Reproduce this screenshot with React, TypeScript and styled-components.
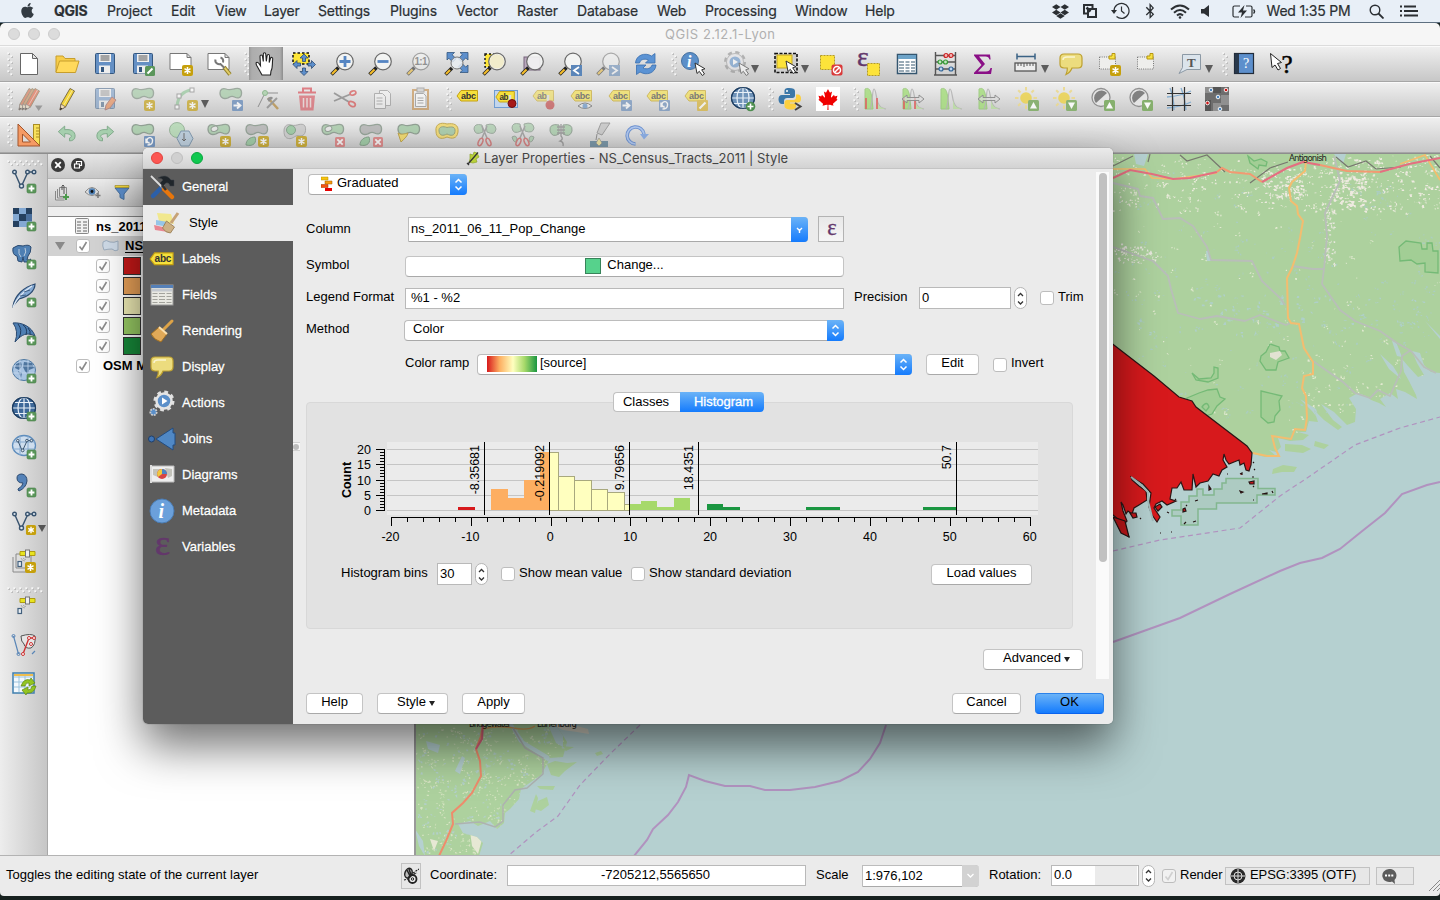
import React from "react";
import styled, { createGlobalStyle } from "styled-components";
import { FaApple, FaDropbox, FaBluetoothB, FaCanadianMapleLeaf } from "react-icons/fa";

const Global = createGlobalStyle`
  * { box-sizing: border-box; }
  body { margin: 0; overflow: hidden; background: #14201f; font-family: "Liberation Sans", Arial, sans-serif; font-size: 13px; color: #000; }
  svg { display: block; flex: none; }
`;

/* ---------- shared icon pieces ---------- */
const Star = () => (
  <g>
    <rect x="13" y="13" width="11" height="11" rx="2" fill="#c6a00c" />
    <path d="M18.5 15v7M15.5 16.7l6 3.6M21.5 16.7l-6 3.6" stroke="#fff" strokeWidth="1.5" />
  </g>
);
const Plus = () => (
  <g>
    <rect x="15" y="15" width="9" height="9" rx="1.5" fill="#5b965b" stroke="#477f48" strokeWidth=".6" />
    <path d="M19.5 16.6v5.8M16.6 19.5h5.8" stroke="#fff" strokeWidth="1.8" />
  </g>
);
const Cross = () => (
  <g>
    <rect x="14" y="14" width="10" height="10" rx="1.5" fill="#dd7373" />
    <path d="M16.3 16.3l5.4 5.4M21.7 16.3l-5.4 5.4" stroke="#fff" strokeWidth="1.8" />
  </g>
);
const Forward = () => (
  <g>
    <rect x="13" y="13" width="11" height="11" rx="1" fill="#5f86b8" />
    <path d="M14.5 18.5h6M18 15.5l3.5 3-3.5 3" stroke="#fff" strokeWidth="1.8" fill="none" />
  </g>
);
const Turn = () => (
  <g>
    <rect x="13" y="13" width="11" height="11" rx="1" fill="#5f86b8" />
    <path d="M16.500 22q5 0 5-4a2.800 2.800 0 1 0-2.800 2.200M15 15.500v4h3.500" stroke="#fff" strokeWidth="1.400" fill="none" />
  </g>
);
const Cursor = ({ x = 12, y = 10 }: { x?: number; y?: number }) => (
  <path d={`M${x} ${y}l2 10.500 2.300-2.200 3 4.200 2.200-1.500-2.800-4.200 3.300-1z`} fill="#fff" stroke="#333" strokeWidth="1" />
);
const BLOB = "M1 6C1 2 4 1 7 2c3 1.500 6 .500 9-.3C20 .6 23 2 22.500 7c-.5 4.500-4 4.500-7 3-3-1.500-4-.5-6.500.8C5 12.500 1 11 1 6z";
const Blob = ({ fill = "#a4cba6" }: { fill?: string }) => <path d={BLOB} fill={fill} stroke="#7d8f80" strokeWidth="1.300" />;
const Lens = ({ children }: { children?: React.ReactNode }) => (
  <g>
    <path d="M1.500 22.500L8.500 15.500" stroke="#222" strokeWidth="3.600" />
    <path d="M2 22L6.500 17.500" stroke="#f5bd2a" strokeWidth="2.200" />
    <circle cx="15" cy="9.500" r="8.300" fill="#f4f5f4" fillOpacity=".9" stroke="#6b6b6b" strokeWidth="1.200" />
    {children}
  </g>
);
const Tag = ({ t = "abc" }: { t?: string }) => (
  <g>
    <path d="M1 9L5 3.500H21.500V14H5z" fill="#f6e03c" stroke="#c5a114" strokeWidth="1" />
    <text x="5" y="11.800" fontSize="9" fontWeight="700" fill="#333" textLength={t.length * 5}>{t}</text>
  </g>
);
const Floppy = () => (
  <g>
    <rect x="2.500" y="1.500" width="19" height="20" rx="1" fill="#6590c4" stroke="#34577f" />
    <rect x="6" y="2" width="12" height="8" fill="#f2f2f2" />
    <path d="M7.500 4h9M7.500 6h9M7.500 8h9" stroke="#444" strokeWidth=".9" />
    <rect x="6" y="13.500" width="11" height="8" fill="#eee" />
    <rect x="8" y="15" width="3" height="5" fill="#34577f" />
  </g>
);
const VNodes = () => (
  <g fill="none" stroke="#39546f" strokeWidth="1.400">
    <path d="M2.500 3L8 15.500 9.500 17 16 3h6" />
    <circle cx="2.500" cy="3" r="1.800" fill="#dde6ee" />
    <circle cx="9.500" cy="17" r="2" fill="#dde6ee" />
    <circle cx="15.500" cy="3" r="1.800" fill="#dde6ee" />
    <circle cx="22" cy="3" r="1.800" fill="#dde6ee" />
  </g>
);
const Globe = ({ fill = "#6d9bcd", line = "#1f3f63" }: { fill?: string; line?: string }) => (
  <g stroke={line} fill="none" strokeWidth="1.200">
    <ellipse cx="12" cy="11" rx="11.500" ry="10.500" fill={fill} />
    <path d="M0.500 11h23M2.500 5.500h19M2.500 16.500h19M12 .500v21" stroke="#e8f0f8" />
    <ellipse cx="12" cy="11" rx="6" ry="10.500" stroke="#e8f0f8" />
    <ellipse cx="12" cy="11" rx="11.500" ry="10.500" />
  </g>
);
const Hist = ({ marks, arrows }: { marks?: boolean; arrows?: boolean }) => (
  <g>
    <path d="M2 22V2c4-2 6 1 7 10l1 10z" fill="#9fdc72" stroke="#8cc568" />
    <path d="M7 22c3-5 2-20 4-20s2 9 4 14 4 5 8 6" fill="none" stroke="#aaa" strokeWidth="1.200" />
    <path d="M14 13c1 6 4 8 9 9H14z" fill="#b7dd9c" />
    {marks && <path d="M3 11v11M14 11v11" stroke="#e23b3b" strokeWidth="1.600" />}
    {arrows && <path d="M1 12l5-4v2.500h12V8l5 4-5 4v-2.500H6V16z" fill="#ddd" fillOpacity=".7" stroke="#777" />}
  </g>
);
const Sun = () => (
  <g>
    <circle cx="11" cy="11" r="5.800" fill="#ecd350" />
    <path d="M11 0v3.500M11 18.500V22M0 11h3.500M18.500 11H22M3.200 3.200l2.300 2.300M16.500 16.500l2.300 2.300M18.800 3.200l-2.300 2.300M3.200 18.800l2.300-2.300" stroke="#ecd98a" strokeWidth="2" />
  </g>
);
const Contrast = () => (
  <g>
    <circle cx="10" cy="10.500" r="9" fill="#e6e6e6" stroke="#888" strokeWidth="1.300" />
    <path d="M16 6A7 7 0 1 0 5 16z" fill="#777" />
  </g>
);
const UpDown = ({ down }: { down?: boolean }) => (
  <g>
    <rect x="13" y="13" width="11" height="11" rx="1.500" fill="#7eac63" />
    <path d={down ? "M15 15.500h7l-3.500 6.500z" : "M15 21.500h7L18.500 15z"} fill="#fff" />
  </g>
);
const PencilShape = ({ c = "#f2d43a", x = 0 }: { c?: string; x?: number }) => (
  <g transform={`translate(${x} 0)`}>
    <path d="M4 17L13 1.500l4.500 2.500L8.500 20 3 23z" fill={c} stroke="#70613a" strokeWidth=".9" />
    <path d="M6.500 18.500L15.500 3" stroke="#fff" strokeOpacity=".5" />
    <path d="M4 17l4.500 3L3 23z" fill="#f0dfbd" stroke="#655" strokeWidth=".7" />
    <path d="M3.700 20.500l1.500 1L3 23z" fill="#111" />
  </g>
);
const Gear = () => (
  <g>
    <circle cx="14" cy="10" r="9" fill="none" stroke="#e0e0e0" strokeWidth="3" strokeDasharray="3.700 3.370" />
    <circle cx="14" cy="10" r="7.500" fill="#5b8fc9" stroke="#e4e4e4" strokeWidth="2.500" />
    <path d="M12 6.500l5.500 3.500-5.500 3.500z" fill="#fff" />
  </g>
);
const Balloon = () => (
  <g>
    <path d="M5 2h14q4 0 4 4v6q0 4-4 4h-6c-1 3-3 5-6 6.500 1-2 1.500-4 1.300-6.500H5q-4 0-4-4V6q0-4 4-4z" fill="#ecdc7e" stroke="#bda02f" strokeWidth="1.200" />
    <path d="M4 8q0-3 4-3h8" fill="none" stroke="#faf5d0" strokeWidth="1.500" />
  </g>
);
const Scissors = () => (
  <g fill="none">
    <path d="M9 3l5 12M14 3L9 15" stroke="#888" strokeWidth="1.500" />
    <ellipse cx="7.500" cy="19" rx="2" ry="4" stroke="#cf5757" strokeWidth="1.500" transform="rotate(25 7.500 19)" />
    <ellipse cx="15.500" cy="19" rx="2" ry="4" stroke="#cf5757" strokeWidth="1.500" transform="rotate(-25 15.500 19)" />
  </g>
);
const Undo = () => <path d="M1 9l8-7v4.500c8-1 13 2 13 8 0 4-3 6-7 6v-3.500c4-1 3-6-6-5.500V16z" fill="#a6cfae" stroke="#7fa98a" strokeWidth="1.200" />;
const Satellite = ({ y = 0 }: { y?: number }) => (
  <g transform={`translate(0 ${y})`}>
    <path d="M8 2.500h5.500v4H8zM17.500 2.500H23v4h-5.500z" fill="#e8e420" stroke="#b09c10" />
    <rect x="13.500" y="1" width="4" height="7" fill="#eee" stroke="#777" />
    <path d="M9 9q1 3 4 3M11 9q1 1.500 3 1.500" stroke="#aaa" fill="none" />
    <rect x="6" y="12.500" width="3.500" height="5" fill="#e8eef4" stroke="#43617e" strokeWidth="1.200" />
  </g>
);

const icons: Record<string, React.ReactNode> = {
  page: <path d="M3.500 1.500h12l5 5v16h-17zM15.500 1.500v5h5" fill="#fff" stroke="#666" />,
  folder: (
    <g stroke="#c79e2c">
      <path d="M1 20V4h7l2 2.500h10V10" fill="#f7cd4a" />
      <path d="M1 20L4.500 9H24l-3.500 11.500H1z" fill="#ffd95c" />
    </g>
  ),
  save: <Floppy />,
  saveas: (
    <g>
      <Floppy />
      <rect x="14" y="14" width="10" height="10" rx="1.500" fill="#5b965b" />
      <path d="M16.500 21.500l5-5" stroke="#fff" strokeWidth="2" />
    </g>
  ),
  newlayout: <g><path d="M1 1.500h17l4 4v12H1zM18 1.500v4h4" fill="#fff" stroke="#777" /><Star /></g>,
  layouts: (
    <g>
      <path d="M1 1.500h17l4 4v12H1zM18 1.500v4h4" fill="#fff" stroke="#777" />
      <path d="M17 15l6 7.500" stroke="#94832e" strokeWidth="4" />
      <path d="M17 15l6 7.500" stroke="#e3ce68" strokeWidth="2" />
      <path d="M8.500 7.500c-1 4 3 5 5 4.500l4 4M13.500 5.500c3 1 3 3 2.500 5" stroke="#777" strokeWidth="2" fill="none" />
    </g>
  ),
  hand: (
    <path d="M8 23L3 14c-1-2-1.500-3.500 0-3.800 1.500-.2 2.500 2 3.500 3.500L6 4.500c0-2 2.300-2 2.500 0l.8 5V2.300c0-2 2.400-2 2.500 0l.5 7 .8-5.500c.4-2 2.600-1.500 2.400.3l-.3 6.400 1.300-4.200c.6-1.600 2.500-1 2.200.7C18 12 19 16 17 19l-.5 4z" fill="#fff" stroke="#222" strokeWidth="1.100" />
  ),
  pansel: (
    <g>
      <rect x="1" y="1" width="16" height="11" fill="#fde639" stroke="#111" strokeWidth="1.500" strokeDasharray="2.500 2" />
      <path d="M12 2l4 4h-2.500v3.500h-3V6H8zM12 23.500l4-4h-2.500V16h-3v3.500H8zM1 12.500l4-4V11h3.500v3H5v2.500zM23.500 12.500l-4-4V11H16v3h3.500v2.500z" fill="#5d8fcc" stroke="#2e4c73" strokeWidth=".8" />
    </g>
  ),
  zoomin: <Lens><path d="M15 4v11M9.500 9.500h11" stroke="#5585c2" strokeWidth="2.800" /></Lens>,
  zoomout: <Lens><path d="M9.500 9.500h11" stroke="#5585c2" strokeWidth="2.800" /></Lens>,
  zoom1: <g opacity=".55"><Lens><text x="8.500" y="13" fontSize="10" fontWeight="700" fill="#555" textLength="13">1:1</text></Lens></g>,
  zoomfull: (
    <g>
      <path d="M3 .5h7.500L8.200 2.800l4 4-3.400 3.400-4-4L3 8zM24 .5v7.500l-2.300-2-4 4-3.400-3.400 4-4L16 .5zM24 20.500h-8l2.300-2-4-4 3.400-3.400 4 4L24 13z" fill="#5d8fcc" stroke="#34577f" strokeWidth=".8" />
      <path d="M1.500 22.500L8 16" stroke="#222" strokeWidth="3.600" />
      <path d="M2 22l4-4" stroke="#f5bd2a" strokeWidth="2.200" />
      <circle cx="13" cy="11" r="6" fill="#e9edf2" fillOpacity=".85" stroke="#777" />
    </g>
  ),
  zoomsel: <g><rect x="3" y="2" width="12" height="13" fill="#fde639" stroke="#111" strokeDasharray="2 2" strokeWidth="1.400" /><Lens><circle cx="15" cy="9.500" r="7" fill="#f1eccb" /></Lens></g>,
  zoomlayer: <g><rect x="4" y="5" width="16" height="13" fill="#b9a7bd" stroke="#75637a" /><Lens /></g>,
  zoomlast: <g><Lens /><rect x="13" y="13" width="11" height="11" fill="#5b86b9" /><path d="M21 15l-5 3.500 5 3.500" stroke="#fff" strokeWidth="1.800" fill="none" /></g>,
  zoomnext: <g opacity=".5"><Lens /><rect x="13" y="13" width="11" height="11" fill="#5b86b9" /><path d="M16 15l5 3.500-5 3.500" stroke="#fff" strokeWidth="1.800" fill="none" /></g>,
  refresh: (
    <g fill="#5b93d4" stroke="#3a6faf" strokeWidth=".8">
      <path d="M1.500 11C2 3 11 0 17.500 4L21 1.500V11h-9.500l3-3C10 6 6 8 5.500 11z" />
      <path d="M22 13c-.5 8-9.500 11-16 7l-3.500 2.500V13H12l-3 3c4 2 8.500 0 9-3z" />
    </g>
  ),
  info: <g><circle cx="9" cy="9" r="8.500" fill="#5b8fc9" stroke="#47719f" /><text x="6" y="15" fontSize="16" fontStyle="italic" fontWeight="700" fontFamily="Liberation Serif, serif" fill="#fff">i</text><Cursor x={14} y={11} /></g>,
  action: <g opacity=".55"><circle cx="11" cy="10" r="9.500" fill="none" stroke="#888" strokeWidth="3" strokeDasharray="4.100 3.360" /><circle cx="11" cy="10" r="8.500" fill="#e6e6ea" stroke="#999" /><circle cx="11" cy="10" r="5.500" fill="#5b8fc9" /><path d="M9 7l5 3-5 3z" fill="#fff" /><Cursor x={15} y={11} /></g>,
  select: <g><rect x="1" y="1.500" width="22" height="19" fill="#cfcfcf" stroke="#111" strokeWidth="1.600" strokeDasharray="3 1.500" /><rect x="3" y="3" width="15" height="13" fill="#fde33a" stroke="#c2a626" /><Cursor x={12} y={9} /></g>,
  deselect: <g><rect x="1.500" y="3.500" width="14" height="14" fill="#fde33a" stroke="#b39b24" strokeDasharray="2 1" /><rect x="12.500" y="12.500" width="11" height="11" rx="2" fill="#da3a3a" /><circle cx="18" cy="18" r="3.500" fill="none" stroke="#fff" strokeWidth="1.500" /><path d="M15.500 20.500l5-5" stroke="#fff" strokeWidth="1.500" /></g>,
  expr: <g><text x="0" y="14" fontSize="28" fontFamily="Liberation Serif, serif" fill="#63376b" stroke="#63376b" strokeWidth=".4">ε</text><rect x="10.500" y="11.500" width="12" height="12" fill="#fde33a" stroke="#b39b24" strokeDasharray="2 1" /></g>,
  table: <g><rect x="2.500" y="2.500" width="19" height="19" fill="#fff" stroke="#34566f" strokeWidth="1.500" /><path d="M3 5h18" stroke="#6da3c8" strokeWidth="4" /><path d="M4 10h5M10.500 10h4M16 10h4M4 13h5M10.500 13h4M16 13h4M4 16h5M10.500 16h4M16 16h4M4 19h5M10.500 19h4M16 19h4" stroke="#34566f" strokeWidth="1.200" /></g>,
  abacus: <g><path d="M2.500 0v23M22.500 0v23M1 23h23M2 3.500h20M2 10h20M2 17h20" stroke="#555" strokeWidth="1.400" /><g strokeWidth="1.200"><circle cx="13" cy="3.500" r="2" fill="#f3b4b4" stroke="#c22" /><circle cx="18" cy="3.500" r="2" fill="#f3b4b4" stroke="#c22" /><circle cx="7" cy="10" r="2" fill="#bfe6bf" stroke="#393" /><circle cx="12.500" cy="10" r="2" fill="#bfe6bf" stroke="#393" /><circle cx="8" cy="17" r="2" fill="#bcd6f0" stroke="#369" /><circle cx="18" cy="17" r="2" fill="#bcd6f0" stroke="#369" /></g></g>,
  sigma: <path d="M3 2.500h16l.6 5h-1.200c-.5-2-1.500-3-4-3H8l6 7.500-7 7.500h8c2.500 0 4-1 4.500-3.500H21l-1 6H3v-1.200L10.500 13 3 3.500z" fill="#8a0f86" />,
  measure: <g><path d="M3 4.500h18M3 1.500v6M21 1.500v6" stroke="#3a6285" strokeWidth="1.500" /><rect x="1" y="11" width="21" height="8" fill="#eee" stroke="#555" strokeWidth="1.300" /><path d="M4 11v3M7 11v3M10 11v4M13 11v3M16 11v3M19 11v3" stroke="#555" /></g>,
  tip: <Balloon />,
  newbook: <g><rect x="2.500" y="5" width="16" height="12" fill="#eeeeec" stroke="#777" strokeDasharray="1 1.200" /><path d="M12 7V4h3V1.500h3V7z" fill="#f7e242" stroke="#b7960f" /><Star /></g>,
  book: <g><rect x="2.500" y="5" width="16" height="12" fill="#eeeeec" stroke="#777" strokeDasharray="1 1.200" /><path d="M12 7V4h3V1.500h3V7z" fill="#f7e242" stroke="#b7960f" /></g>,
  annot: <g><path d="M4.500 2.500h18v15H9l-8 4 3.500-6z" fill="#dbe4ec" stroke="#8c99a5" /><text x="9" y="14.500" fontSize="13" fontWeight="700" fontFamily="Liberation Serif, serif" fill="#555">T</text></g>,
  help: <g><rect x="2.500" y="1.500" width="19" height="20" fill="#5d8fcc" stroke="#222c3a" strokeWidth="1.200" /><rect x="3" y="2" width="4" height="19" fill="#28384c" /><text x="11" y="16" fontSize="14" fontFamily="Liberation Serif, serif" fill="#fff">?</text></g>,
  whats: <g><path d="M.5 1.500l1.500 14 3-2.500 3 5 2.500-1.500-3-5 4-1z" fill="#fff" stroke="#222" /><text x="11.500" y="21" fontSize="25" fontFamily="Liberation Serif, serif" stroke="#000" strokeWidth=".5">?</text></g>,

  pencils: <g><g opacity=".55"><PencilShape c="#d8603a" x={-1} /><PencilShape c="#c4824c" x={2} /><PencilShape c="#e0552f" x={5} /></g><path d="M18 18.500h7.500L21.700 24z" fill="#999" /></g>,
  pencil: <g transform="translate(2 0)"><PencilShape /></g>,
  saveedit: <g opacity=".5"><Floppy /><path d="M13 18l6-8 4 3-6 8-5 2z" fill="#ee7733" stroke="#844" /></g>,
  addfeat: <g opacity=".65"><Blob /><Star /></g>,
  curve: <g opacity=".65"><path d="M3 19C4 10 8 4 18 3" fill="none" stroke="#8fc597" strokeWidth="3" /><rect x="1" y="18" width="4" height="4" fill="#fff" stroke="#888" /><rect x="16" y="1" width="4" height="4" fill="#fff" stroke="#888" /><rect x="3" y="7" width="4" height="4" fill="#fff" stroke="#888" /><Star /></g>,
  movefeat: <g opacity=".7"><Blob /><Forward /></g>,
  node: <g opacity=".75"><path d="M1 20L8 6h13" stroke="#777" fill="none" /><circle cx="8" cy="6" r="2.500" fill="#a6cfa6" stroke="#7a7" /><path d="M11 11l10 11" stroke="#b58d44" strokeWidth="2.500" /><path d="M20 11L10 21" stroke="#888" strokeWidth="2" /><path d="M10 12q4-4 6-1l-4 4z" fill="#777" /></g>,
  trash: <g opacity=".6" fill="none" stroke="#d83a45"><path d="M3 5.500h18M8 5V1.500h8V5" strokeWidth="2" /><path d="M4 8.500h16l-1.500 15h-13z" fill="#d9505a" stroke="none" /><path d="M8.500 11v9.500M12 11v9.500M15.500 11v9.500" stroke="#eed5d5" strokeWidth="1.500" /></g>,
  cut: <g opacity=".65" fill="none"><path d="M1 6l15 9M1 14l17-7" stroke="#777" strokeWidth="1.800" /><ellipse cx="20" cy="6" rx="3" ry="2" stroke="#d64a4a" strokeWidth="1.700" transform="rotate(-20 20 6)" /><ellipse cx="19" cy="17" rx="3.500" ry="2.200" stroke="#d64a4a" strokeWidth="1.700" transform="rotate(30 19 17)" /></g>,
  copy: <g opacity=".55" fill="#f6f6f6" stroke="#888"><path d="M8.500 3.500h8l3 3v12h-11z" /><path d="M3.500 6.500h8l3 3v12h-11z" /><path d="M5.500 11h6M5.500 14h6M5.500 17h6" /></g>,
  paste: <g opacity=".6"><rect x="4" y="3" width="15" height="19" fill="#eee" stroke="#c48b45" strokeWidth="2" /><rect x="8" y="1" width="7" height="4" fill="#ccc" stroke="#888" /><path d="M6.500 6.500h8l2.500 2.500v10.500H6.500z" fill="#fff" stroke="#888" /><path d="M8.500 11h6M8.500 13.500h6M8.500 16h6" stroke="#888" /></g>,
  label: <Tag />,
  labelpin: <g><rect x=".5" y="3.500" width="23" height="17" fill="#c3d6ec" stroke="#6f9cd2" /><g transform="translate(1 1) scale(.9 1)"><Tag t="ab" /></g><path d="M16 8v6" stroke="#ddd" strokeWidth="2.500" /><circle cx="18" cy="16.500" r="4" fill="#a71919" stroke="#701010" /></g>,
  labelpin2: <g opacity=".5"><Tag t="ab" /><path d="M16 8v6" stroke="#ddd" strokeWidth="2.500" /><circle cx="18" cy="18" r="4.500" fill="#c01f1f" /></g>,
  labeleye: <g opacity=".6"><Tag /><path d="M8 19q7-6 14 0-7 5-14 0z" fill="#eee" stroke="#555" /><circle cx="15" cy="19" r="2.500" fill="#5b8fc9" /></g>,
  labelmove: <g opacity=".6"><Tag /><Forward /></g>,
  labelrot: <g opacity=".6"><Tag /><Turn /></g>,
  labeledit: <g opacity=".6"><Tag /><rect x="13" y="13" width="11" height="11" rx="1" fill="#d8ae1e" /><path d="M15.500 21.500l6-6" stroke="#fff" strokeWidth="2.200" /></g>,
  metaglobe: <g><Globe fill="#6f93b9" /><circle cx="19.500" cy="19.500" r="4.800" fill="#4d8d4f" /><path d="M19.500 16.500v6M16.500 19.500h6" stroke="#fff" strokeWidth="1.600" /></g>,
  python: (
    <g>
      <path d="M11 1C7 1 6.500 2.500 6.500 4v3H12v1H4C1.500 8 .5 10 .5 12.500S2 17 4 17h2v-3c0-2 1.500-3 3-3h5.500c1.500 0 2.500-1 2.500-2.500V4c0-2-2-3-6-3z" fill="#3b77a8" />
      <path d="M13 22.500c4 0 5-1.500 5-3.500v-2.500h-6V15.500h8c2.500 0 3-2 3-4s-1-4-3-4h-2v3c0 1.500-1 2.500-2.500 2.500H9c-1.500 0-2.500 1-2.500 2.500V19c0 2 2.500 3.500 6.500 3.500z" fill="#fbcf3f" />
      <circle cx="9" cy="4" r="1" fill="#fff" />
      <path d="M17 16l5.500 3.500L17 23" stroke="#444" strokeWidth="2" fill="none" />
    </g>
  ),
  canada: <g><rect width="24" height="24" fill="#fff" /><FaCanadianMapleLeaf x="1.500" y="2" size={21} color="#f00000" /></g>,
  h1: <g opacity=".75"><Hist marks /></g>,
  h2: <g opacity=".75"><Hist marks arrows /></g>,
  h3: <g opacity=".75"><Hist /></g>,
  h4: <g opacity=".75"><Hist arrows /></g>,
  sunup: <g opacity=".85"><Sun /><UpDown /></g>,
  sundown: <g opacity=".85"><Sun /><UpDown down /></g>,
  conup: <g opacity=".9"><Contrast /><UpDown /></g>,
  condown: <g opacity=".9"><Contrast /><UpDown down /></g>,
  gridref: <g><path d="M3 1q4 10 4 22M14 1q4 10 5 22M0 10q14-1 24-6M0 21q14-1 24-6" stroke="#86aed0" strokeWidth="1.300" fill="none" /><path d="M5.500 0v24M17.500 0v24M0 6.500h24M0 18.500h24" stroke="#333" strokeWidth="1.200" /></g>,
  raster: <g><rect width="24" height="24" fill="#6d6d6d" /><path d="M0 0h8v6H0zM16 8h8v10h-8zM8 16h8v8H8z" fill="#909090" /><path d="M8 0h8v6H8zM0 13h6v11H0z" fill="#555" /><g stroke="#fff" strokeWidth=".9"><circle cx="6" cy="3" r="1.800" fill="#4d86c0" /><circle cx="21" cy="3" r="1.800" fill="#c11" /><circle cx="13" cy="10" r="1.800" fill="#4d86c0" /><circle cx="2.500" cy="16" r="1.800" fill="#c11" /><circle cx="15" cy="22" r="1.800" fill="#4d86c0" /></g></g>,

  cad: <g><rect x="16.500" y="1.500" width="6" height="21" fill="#f7e05a" stroke="#a98d25" /><path d="M19 5h3M19 8h3M19 11h3M19 14h3" stroke="#a98d25" /><path d="M1 1l22 22H1z" fill="#f59a64" stroke="#a1552d" /><path d="M5.500 11l8 8h-8z" fill="#ddd" stroke="#a1552d" /></g>,
  undo: <g transform="translate(2.500 1.500) scale(.8)"><Undo /></g>,
  redo: <g transform="translate(21.500 1.500) scale(-.8 .8)"><Undo /></g>,
  rotate: <g opacity=".8"><Blob /><Turn /></g>,
  simplify: <g opacity=".8"><circle cx="8" cy="7" r="7.500" fill="#b3dab3" stroke="#8bab8d" /><path d="M12 8h8l4 7.500-4 7.500h-8l-4-7.500z" fill="#b7ccdd" stroke="#6d8ba5" /><path d="M15 10v8m-2-2l2 2 2-2" stroke="#555" fill="none" /></g>,
  ring: <g opacity=".75"><Blob /><ellipse cx="7.500" cy="6" rx="3.500" ry="2.500" fill="#e8e8e8" stroke="#7d8f80" transform="rotate(-20 7 6)" /><Star /></g>,
  part: <g opacity=".75"><Blob fill="#b0b0b0" /><path d="M1 22c0-5 4-8 9-8 2 5-1 10-9 8z" fill="#8fc597" stroke="#6d9274" /><Star /></g>,
  fillring: <g opacity=".75"><path d="M1 8C1 2 5 1 8 2c3 1 6 0 8-.5 5-1 7 1 6.500 6-.5 5-4 6-7 5-4 0-6 4-10 3C2 15 1 12 1 8z" fill="#c8c8c8" stroke="#999" /><circle cx="8" cy="7" r="4.500" fill="#8fc597" stroke="#6d9274" /><Star /></g>,
  delring: <g opacity=".75"><Blob /><ellipse cx="7.500" cy="6" rx="3.500" ry="2.500" fill="#e8e8e8" stroke="#7d8f80" transform="rotate(-20 7 6)" /><Cross /></g>,
  delpart: <g opacity=".75"><Blob fill="#b0b0b0" /><path d="M1 22c0-5 4-8 9-8 2 5-1 10-9 8z" fill="#8fc597" stroke="#6d9274" /><Cross /></g>,
  reshape: <g opacity=".8"><Blob /><path d="M1 10c3 2 6 1 10 0-1 4-4 6-7 9z" fill="#f4d95a" stroke="#b8992f" /></g>,
  offset: <g opacity=".85"><path d="M1 8C0 1 6-1 12 1c6-1 12 0 11 8-1 7-6 7-11 5C6 17 1 15 1 8z" fill="#f2d96b" stroke="#c0a23c" /><path d="M4 8C3.500 3.500 8 3 12 4.500c5-1 8.500-1 8 4-.5 4.500-4 4.500-8 2.500-4 2-7.500 2-8-3z" fill="#a4cba6" stroke="#8b9b70" /></g>,
  splitf: <g opacity=".65"><path d="M1 6q0-6 8-4l1 7q-8 4-9-3zM13 2q9-3 10 4-1 7-9 3z" fill="#a4cba6" stroke="#7d8f80" /><Scissors /></g>,
  splitp: <g opacity=".65"><path d="M1 5q0-6 8-4l1 7q-8 4-9-3zM13 1q9-3 10 4-1 6-9 3zM1 14q5-3 5 4-3 3-5-4zM23 14q-5-3-5 4 3 3 5-4z" fill="#a4cba6" stroke="#7d8f80" /><Scissors /></g>,
  merge: <g opacity=".75"><path d="M1 8q-1-8 9-6v9q-7 4-9-3zM14 2q10-2 9 6-2 7-9 3z" fill="#a4cba6" stroke="#7d8f80" /><path d="M8 4h8M8 7h8M8 10h8M12 1v12q3 3-1 5 4 1 3 5" stroke="#888" fill="none" strokeWidth="1.300" /></g>,
  mergeattr: <g opacity=".75"><path d="M14 0h9l-8 12-5-2z" fill="#c4c4c4" stroke="#888" /><path d="M10 11l-1 6" stroke="#777" /><path d="M3 18h18v6H3z" fill="#5c8197" /><path d="M12 15l3 5-3 3-3-3z" fill="#f1e697" stroke="#777" strokeWidth=".6" /></g>,
  rotsym: <g opacity=".85"><path d="M10.500 21A8.500 8.500 0 1 1 19 11" fill="none" stroke="#5b86cf" strokeWidth="3.500" /><path d="M10.500 21A8.500 8.500 0 1 1 19 11" fill="none" stroke="#a8c4f2" strokeWidth="1.700" /><path d="M15 11h9l-5 5.500z" fill="#7ea6e6" /></g>,

  vadd: <g><VNodes /><Plus /></g>,
  radd: <g><rect x="1" y="1" width="19" height="19" fill="#84a9d3" /><path d="M1 1h6v6H1zM14 1h6v6h-6zM7 7h7v7H7zM1 14h6v6H1z" fill="#25405f" /><path d="M14 7h6v7h-6z" fill="#4a6f9d" /><Plus /></g>,
  pgadd: <g><path d="M1 3q5-4 10-2 6-2 8 1 0 6-3 9l-1 4q3 0 4-1-1 3-4 3h-3l-1-5-1 5-4-1-1-5q-5-1-4-8z" fill="#4e7fb3" stroke="#2b4a70" /><path d="M7 4q-1 5 2 8M13 3q2 4-1 8" stroke="#bcd" fill="none" /><Plus /></g>,
  quill: <g><path d="M1 23C3 12 12 4 23 1c0 7-7 13-16 15z" fill="#84a9d3" stroke="#2b4a70" strokeWidth="1.200" /><path d="M1 24C5 14 12 8 20 3" stroke="#dfe9f4" fill="none" strokeWidth="1.300" /><path d="M8 13l6-1M12 9l6-2" stroke="#2b4a70" strokeWidth=".8" /><Plus /></g>,
  mssql: <g><path d="M1 2c9-1 19 4 22 13-8-4-13-2-20 6Q7 10 1 2z" fill="#4e7fb3" stroke="#2b4a70" /><path d="M6 3q5 6 1 14M11 4q5 3 3 10M16 7q3 3 2 7" stroke="#203c60" fill="none" /><Plus /></g>,
  wms: <g><ellipse cx="12" cy="11" rx="11.500" ry="10.500" fill="#a9c4e2" stroke="#4d779f" /><path d="M4 5l5-2 1 4-3 4-4-2zM12 3l8 1 2 5-5 2-1 5-3-4-2-4zM6 12l4 2-1 5z" fill="#3f6792" opacity=".85" /><path d="M1 7h22M1 14h22M8 1v20M16 1v20" stroke="#c5d8ee" strokeWidth=".8" /><Plus /></g>,
  wcs: <g><Globe fill="#3d6899" /><Plus /></g>,
  wfs: <g><ellipse cx="12" cy="10.500" rx="11.500" ry="10" fill="#cfdeee" stroke="#5e8dbd" strokeWidth="1.300" /><path d="M1 7h22M1 14h22M8 1v19M16 1v19" stroke="#86aad0" /><g transform="translate(4 3.500) scale(.7)" strokeWidth="2"><VNodes /></g><Plus /></g>,
  csv: <g><path d="M5 5q0-4 5-4 5 1 5 7-1 7-8 10-1-1-1-2 5-3 5-6-6 0-6-5z" fill="#5482b8" stroke="#2b4a70" /><Plus /></g>,
  vnew: <g><VNodes /><g transform="translate(2 2) scale(.92)"><Star /></g></g>,
  gpxnew: <g><path d="M1 8v15h14M4 5h15v14H4z" fill="none" stroke="#8a8a8a" /><Satellite /><Star /></g>,
  gps: <Satellite />,
  topo: <g fill="none"><path d="M1.500 2l5 18M20 20l3-3" stroke="#5a86b7" strokeWidth="1.200" /><path d="M9 2q10-3 14 0 1 9-4 12-6 1-7-4-3-2-3-8z" fill="#e6e6e6" stroke="#555" /><path d="M11 20L17 4h4" stroke="#c33" strokeWidth="1.400" /><g fill="#fff" stroke="#c33"><circle cx="11" cy="20" r="1.500" /><circle cx="17" cy="4" r="1.500" /><circle cx="22" cy="4" r="1.500" /><circle cx="19" cy="10" r="1.500" /></g><circle cx="1.500" cy="2" r="1.500" stroke="#5a86b7" /><circle cx="6.500" cy="20" r="1.500" stroke="#5a86b7" /></g>,
  evis: <g><rect x="1" y="1" width="21" height="20" fill="#f4f9fd" stroke="#3f7fae" strokeWidth="1.500" /><path d="M2 5h19M2 10h19M2 15h19M7 3v17M13 3v17" stroke="#9cc3dd" /><path d="M2 3h19" stroke="#efbd4e" strokeWidth="2" /><path d="M9 14q3-8 9-6l1-2 4 5-6 3V11q-3-1-4 3z" fill="#93c521" stroke="#5d8410" strokeWidth=".7" /><path d="M24 14q-2 8-9 7l-1 2-4-5 6-3v3q4 0 4-4z" fill="#93c521" stroke="#5d8410" strokeWidth=".7" /></g>,

  general: <g><path d="M12 12L3 21" stroke="#2b5fa8" strokeWidth="4.500" strokeLinecap="round" /><path d="M12 12L1 1" stroke="#ddd" strokeWidth="1.800" /><path d="M14 14l8 8" stroke="#e8760b" strokeWidth="4.500" strokeLinecap="round" /><path d="M14 10l-3 3" stroke="#888" strokeWidth="2" /><path d="M8 3q8-5 13 2l3 0v6h-4q-1-4-4-3l-3 3-3-3 3-3q-1-2-5-2z" fill="#20262b" stroke="#3c4248" strokeWidth=".5" /><path d="M12 10l4 5" stroke="#333" strokeWidth="2.500" /></g>,
  stylei: <g><path d="M3 2l14 1 3 10-15-3z" fill="#f5e75c" opacity=".65" /><path d="M2 9l12 2 2 5-14-2z" fill="#8dc1e8" opacity=".9" /><path d="M0 14l13 3 1 4-13-2z" fill="#e76e7c" opacity=".8" /><path d="M24 2l-7 10" stroke="#c6a276" strokeWidth="3" /><path d="M12.500 10l8 6-4 6q-5 0-8-5z" fill="#cdb185" stroke="#93774d" strokeWidth=".8" /></g>,
  labels: <g transform="translate(-1 2) scale(1.120)"><Tag /></g>,
  fields: <g><rect x="1" y="2" width="22" height="20" fill="#e9e9e2" stroke="#999" /><path d="M1 3.500h22" stroke="#5580b8" strokeWidth="3" /><path d="M2 7h20" stroke="#c4c9cf" strokeWidth="3" /><path d="M2.500 10.500h5M9 10.500h6M16.500 10.500h5M2.500 13.500h5M9 13.500h6M16.500 13.500h5M2.500 16.500h5M9 16.500h6M16.500 16.500h5M2.500 19.500h5M9 19.500h6M16.500 19.500h5" stroke="#a3a39c" strokeWidth="1.100" /></g>,
  rendering: <g><path d="M22 2l-9 9" stroke="#dda347" strokeWidth="3" strokeLinecap="round" /><path d="M9 8l8 7-6 8Q4 21 1 15z" fill="#e0a958" stroke="#9a6b22" /><path d="M9 8l8 7" stroke="#fbe0ae" strokeWidth="2" /></g>,
  display: <Balloon />,
  actions: <g><Gear /><circle cx="3.500" cy="21" r="3.200" fill="#5b8fc9" stroke="#ccc" strokeWidth="1.800" strokeDasharray="1.800 1" /></g>,
  joins: <g><circle cx="1.500" cy="12" r="3" fill="#3f74b5" stroke="#1e3f6b" /><path d="M6 12L23 1v5h2v12h-2v5z" fill="#5088c5" stroke="#234c80" /></g>,
  diagrams: <g><path d="M1 3h23v16H1z" fill="#eee" stroke="#bbb" /><path d="M3 6h7l3 3-5 5-5-2zM15 5l7 1v7l-4 2z" fill="#c3c3bb" /><circle cx="12" cy="11" r="5" fill="#d54545" /><path d="M12 11V6a5 5 0 0 0-4 8z" fill="#f0c93e" /><path d="M12 11V6a5 5 0 0 1 5 5z" fill="#4b86c4" /><path d="M1 2v18" stroke="#ddd" strokeWidth="2" /></g>,
  metadata: <g><circle cx="12" cy="12" r="12" fill="#6ba0db" stroke="#4b7cb3" /><text x="8.500" y="19" fontSize="20" fontStyle="italic" fontWeight="700" fontFamily="Liberation Serif, serif" fill="#fff">i</text></g>,
  variables: <text x="5" y="20" fontSize="36" fontFamily="Liberation Serif, serif" fill="#63376b" stroke="#63376b" strokeWidth=".5">ε</text>,
};

const Icon = ({ name, size = 24 }: { name: string; size?: number }) => (
  <svg width={size} height={size} viewBox="0 0 24 24" overflow="visible">{icons[name]}</svg>
);

/* ---------- menu bar ---------- */
const MenuBar = styled.header`
  height: 23px; display: flex; align-items: center; background: #e8eff7; border-bottom: 1px solid #5d6f80;
  font-family: Inter, sans-serif; font-size: 14px; color: #2b2f33; padding-left: 19px;
`;
const AppleCell = styled.div` width: 35px; color: #333b42; padding-bottom: 2px; `;
const MenuItem = styled.span<{ $w: number; $bold?: boolean }>`
  width: ${(p) => p.$w + 19}px; white-space: nowrap; letter-spacing: -0.2px; padding-bottom: 1px;
  font-weight: ${(p) => (p.$bold ? 700 : 400)}; -webkit-text-stroke: .2px #2b2f33; ${(p) => p.$bold && "letter-spacing:-0.3px;"}
`;
const Extra = styled.div<{ $w: number }>`
  width: ${(p) => p.$w}px; height: 22px; display: flex; align-items: center; justify-content: center; white-space: nowrap;
`;
const Spacer = styled.div` flex: 1; `;
const menus: [string, number][] = [["QGIS", 34], ["Project", 45], ["Edit", 25], ["View", 30], ["Layer", 35], ["Settings", 53], ["Plugins", 47], ["Vector", 42], ["Raster", 41], ["Database", 61], ["Web", 29], ["Processing", 71], ["Window", 51], ["Help", 30]];

const Menu = () => (
  <MenuBar>
    <AppleCell><FaApple size={17} /></AppleCell>
    {menus.map(([t, w], i) => <MenuItem key={t} $w={w} $bold={i === 0}>{t}</MenuItem>)}
    <Spacer />
    <Extra $w={30}><FaDropbox size={17} /></Extra>
    <Extra $w={30}><svg width="16" height="16" viewBox="0 0 16 16" fill="none" stroke="#2b2f33" strokeWidth="2"><path d="M5.500 10.500H2V2h8.500v3.500M6 6h8v8H6z" /><path d="M4.500 4.500l4 4" strokeWidth="2.500" /></svg></Extra>
    <Extra $w={30}><svg width="19" height="18" viewBox="0 0 19 18" fill="none" stroke="#2b2f33" strokeWidth="1.200"><path d="M3 9a7.500 7.500 0 1 1 2.500 5.500M10.500 4.500V9l3 2.500" /><path d="M0 8h6L3 12z" fill="#2b2f33" stroke="none" /></svg></Extra>
    <Extra $w={29}><FaBluetoothB size={16} /></Extra>
    <Extra $w={31}><svg width="20" height="15" viewBox="0 0 20 15" fill="none" stroke="#2b2f33" strokeWidth="2"><path d="M1 5.500q9-8 18 0M4 8.700q6-5.500 12 0M7 11.500q3-2.800 6 0" /><circle cx="10" cy="13.500" r="1.300" fill="#2b2f33" stroke="none" /></svg></Extra>
    <Extra $w={20}><svg width="9" height="12" viewBox="0 0 9 12"><path d="M0 4h3l5-4v12L3 8.500H0z" fill="#2b2f33" /></svg></Extra>
    <Extra $w={51}><svg width="31" height="13" viewBox="-7 0 31 13"><path d="M8 1H2.500Q1 1 1 2.500v8Q1 12 2.500 12H7M14 1h4.500Q20 1 20 2.500v8q0 1.500-1.500 1.500H13" fill="none" stroke="#2b2f33" strokeWidth="1.200" /><path d="M21.500 4.500q2 2 0 4" stroke="#2b2f33" fill="none" strokeWidth="1.400" /><path d="M12.500 0L6 7.500h4L8.500 13 15 5.500h-4z" fill="#2b2f33" /></svg></Extra>
    <Extra $w={86}><MenuItem $w={66}>Wed 1:35 PM</MenuItem></Extra>
    <Extra $w={48}><svg width="15" height="15" viewBox="0 0 15 15" fill="none" stroke="#2b2f33" strokeWidth="1.400"><circle cx="6" cy="6" r="4.800" /><path d="M9.500 9.500l5 5" strokeWidth="1.800" /></svg></Extra>
    <Extra $w={40}><svg width="40" height="12" viewBox="0 0 40 12" stroke="#2b2f33" strokeWidth="1.800"><path d="M0 1.500h2M4 1.500h12M0 6h2M4 6h14M0 10.500h2M4 10.500h14" /></svg></Extra>
  </MenuBar>
);

/* ---------- main window ---------- */
const Screen = styled.div` width: 1440px; height: 900px; position: relative; overflow: hidden; display: flex; flex-direction: column; background: #17211f; `;
const WindowTitle = styled.div`
  height: 23px; background: #f6f6f6; display: flex; align-items: center; border-bottom: 1px solid #dcdcdc;
  border-radius: 5px 5px 0 0; font-family: Inter, sans-serif; font-size: 13px; letter-spacing: .55px; color: #b0b0b0;
`;
const TitleLabel = styled.span` width: 110px; white-space: nowrap; font-feature-settings: "calt" 0; `;
const Lights = styled.div` flex: 1 1 0; display: flex; gap: 8px; padding-left: 8px; margin-right: -8px; `;
const Light = styled.i<{ $c: string; $b: string }>`
  width: 12px; height: 12px; border-radius: 50%; background: ${(p) => p.$c}; border: 1px solid ${(p) => p.$b};
`;
const Toolbar = styled.div`
  height: 35.500px; display: flex; align-items: center; background: linear-gradient(#efefef, #c7c7c7);
  border-top: 1px solid #fafafa; border-bottom: 1px solid #a6a6a6; padding-left: 1px;
`;
const GripSlot = styled.div` width: 9px; flex: none; padding-left: 6px; `;
const SideGripSlot = styled.div<{ $mt: number }>` height: 6px; flex: none; margin: ${(p) => p.$mt}px 0 -4px 7px; `;
const Dots = ({ n, across }: { n: number; across?: boolean }) => (
  <svg width={across ? n * 3 : 6} height={across ? 6 : n * 3} overflow="visible">
    {Array.from({ length: n }, (_, i) => {
      const a = i * 3 + 1, b = i % 2 ? 4 : 1;
      const x = across ? a : b, y = across ? b : a;
      return <g key={i}><rect x={x} y={y} width="2" height="2" fill="#b4b4b4" /><rect x={x - 0.7} y={y - 0.7} width="2" height="2" fill="#f7f7f7" /></g>;
    })}
  </svg>
);
const Tool = styled.div<{ $menu?: boolean; $on?: boolean }>`
  width: ${(p) => (p.$menu ? 50 : 38)}px; height: 33px; display: flex; align-items: center; ${(p) => (p.$menu ? "padding-left:12px;" : "justify-content:center;")}
  ${(p) => p.$on && "background: linear-gradient(90deg, transparent 2px, #9a9a9a 2px, #adadad 5px, #b5b5b5 50%, #adadad 33px, #929292 35.5px, transparent 36px);"}
`;
const Caret = styled.i`
  border: 4px solid transparent; border-top: 8px solid #5c5c5c; border-bottom: 0; margin: 10px 0 0 3px; flex: none;
`;
const rows: string[][] = [
  "| page folder save saveas newlayout layouts | hand! pansel zoomin zoomout zoom1 zoomfull zoomsel zoomlayer zoomlast zoomnext refresh | info action+ select+ deselect expr table abacus sigma measure+ tip newbook book annot+ | help whats",
  "| pencils pencil saveedit addfeat curve+ movefeat node trash cut copy paste | label labelpin labelpin2 labeleye labelmove labelrot labeledit | metaglobe | python canada | h1 h2 h3 h4 sunup sundown conup condown gridref raster",
  "| cad undo redo rotate simplify ring part fillring delring delpart reshape offset splitf splitp merge mergeattr rotsym",
].map((r) => r.split(" "));

const Toolbars = () => (
  <>
    {rows.map((r, i) => (
      <Toolbar key={i}>
        {r.map((k, j) => {
          if (k === "|") return <GripSlot key={j}><Dots n={8} /></GripSlot>;
          const name = k.replace(/[+!]/, "");
          return (
            <Tool key={j} $menu={k.endsWith("+")} $on={k.endsWith("!")}>
              <Icon name={name} />
              {k.endsWith("+") && <Caret />}
            </Tool>
          );
        })}
      </Toolbar>
    ))}
  </>
);

const Workspace = styled.div` height: 702px; display: flex; border-top: 1px solid #8e8e8e; overflow: hidden; `;
const SideTools = styled.div`
  width: 48px; flex: none; background: linear-gradient(90deg, #ededed, #c6c6c6); border-right: 1px solid #a8a8a8; display: flex; flex-direction: column;
`;
const SideTool = styled.div` height: 38px; flex: none; display: flex; align-items: center; padding-left: 12px; `;
const SideCaret = styled.i` border: 4px solid transparent; border-top: 7px solid #555; border-bottom: 0; margin: 12px 0 0 2px; `;
const LayerPanel = styled.div` width: 368px; flex: none; background: #fff; border-right: 2px solid #9a9a9a; `;
const PanelHead = styled.div` height: 25px; background: linear-gradient(#e6e6e6, #c8c8c8); border-bottom: 1px solid #b5b5b5; display: flex; align-items: center; padding: 0 0 2px 3px; gap: 6px; `;
const PanelTools = styled.div` height: 28px; background: linear-gradient(#ececec, #cacaca); border-bottom: 1px solid #aaa; display: flex; align-items: center; padding-left: 6px; gap: 6px; `;
const TreeHead = styled.div` height: 10px; background: #eee; border-bottom: 1px solid #888; `;
const TreeRow = styled.div<{ $pad: number; $h?: number; $sel?: boolean; $u?: boolean }>`
  height: ${(p) => p.$h ?? 20}px; display: flex; align-items: center; padding-left: ${(p) => p.$pad}px; white-space: nowrap; font-weight: 700;
  background: ${(p) => (p.$sel ? "#d2d2d2" : "transparent")}; ${(p) => p.$u && "text-decoration: underline; text-underline-offset: 2px;"}
`;
const Twisty = styled.i` border: 5px solid transparent; border-top: 8px solid #8a8a8a; border-bottom: 0; margin-right: 11px; `;
const Swatch = styled.i<{ $c: string }>` width: 18px; height: 18px; margin-left: 13px; background: ${(p) => p.$c}; border: 1px solid #333; `;
const CheckBox = styled.span<{ $dim?: boolean }>`
  width: 14px; height: 14px; flex: none; border-radius: 3px; background: ${(p) => (p.$dim ? "#f1f1f1" : "#fff")}; border: 1px solid #bdbdbd; display: flex; align-items: center; justify-content: center;
`;
const Tick = ({ c = "#8b8b8b" }: { c?: string }) => <svg width="10" height="10" viewBox="0 0 10 10"><path d="M1.500 5.500L4 8.500 8.500 1" fill="none" stroke={c} strokeWidth="1.600" /></svg>;
const TreeIcon = styled.div<{ $l: number; $r: number }>` margin: 0 ${(p) => p.$r}px 0 ${(p) => p.$l}px; `;

const sideTop = ["vadd", "radd", "pgadd", "quill", "mssql", "wms", "wcs", "wfs", "csv", "vnew", "gpxnew"];
const classes = ["#c81818", "#e9a158", "#f0edb6", "#98cb64", "#178a3a"];

/* ---------- map ---------- */
const rand = (seed: number) => () => {
  seed = (seed + 0x6d2b79f5) | 0;
  let t = Math.imul(seed ^ (seed >>> 15), 1 | seed);
  t = (t + Math.imul(t ^ (t >>> 7), 61 | t)) ^ t;
  return ((t ^ (t >>> 14)) >>> 0) / 4294967296;
};
const specks = (seed: number, n: number, x: number, y: number, w: number, h: number, s: number) => {
  const r = rand(seed);
  let d = "";
  for (let i = 0; i < n; i++) {
    const cx = x + r() * w, cy = y + r() * h, k = 1 + Math.floor(r() * 4);
    for (let j = 0; j < k; j++) {
      d += `M${(cx + r() * 6).toFixed(1)} ${(cy + r() * 6).toFixed(1)}h${(0.4 + r() * s).toFixed(1)}l${(r() * 1.5 - 0.7).toFixed(1)} ${(0.5 + r() * s * 0.8).toFixed(1)}h-${(0.4 + r() * s).toFixed(1)}z`;
    }
  }
  return d;
};
const EAST = "M1100 150H1440V372L1431 371 1424 364 1420 352 1412 350 1417 362 1424 374 1418 376 1408 365 1402 358 1404 371 1409 380 1416 394 1417 398 1405 391 1396 388 1398 398 1390 392 1380 398 1386 406 1379 402 1371 399 1366 395 1358 392 1349 397 1356 408 1355 421 1347 424 1334 411 1321 403 1333 419 1342 426 1338 429 1324 419 1314 409 1318 421 1309 420 1306 431 1298 431 1309 434 1303 439 1290 440 1278 437 1281 446 1276 451 1269 449 1276 455 1265 456 1253 453 1246 448 1100 400z";
const SOUTH = "M414 720H553L562 733 567 741 563 756 550 757 546 765 541 774 528 783 521 788 519 798 510 808 505 812 504 822 497 828 490 820 478 825 470 820 458 823 463 832 477 836 483 842 479 855H414z";
const RED = "M1110 341L1154 375 1179 396 1192 400 1196 406 1247 445 1252 452 1251 464 1249 470 1246 469 1244 462 1240 464 1239 459 1234 461 1229 463 1226 459 1224 453 1223 459 1227 466 1222 469 1219 475 1213 473 1208 480 1200 482 1196 486 1193 473 1192 489 1184 489 1181 481 1177 487 1172 487 1170 498 1176 500 1167 504 1162 500 1156 503 1154 507 1160 516 1157 521 1152 514 1149 506 1151 492 1143 483 1131 476 1132 479 1139 485 1146 490 1147 499 1139 504 1134 507 1132 513 1128 510 1126 513 1123 504 1121 501 1123 510 1127 520 1124 523 1129 536 1122 529 1118 518 1113 514 1110 519z";

const MapCanvas = () => (
  <svg width="1024" height="701" viewBox="416 153 1024 701">
    <defs>
      <clipPath id="east"><path d={EAST} /></clipPath>
      <clipPath id="south"><path d={SOUTH} /></clipPath>
    </defs>
    <rect x="415" y="150" width="1025" height="710" fill="#b5d0d0" />
    <path d={EAST} fill="#add19e" />
    <path d={SOUTH} fill="#add19e" />
    <g fill="#add19e">
      <path d="M1285 443l17 1 9 4-8 4-18-2zM1315 440l14 4-5 4-10-3zM1273 468l10-4 14 2-3 5-12 0-10 2z" />
      <path d="M505 800q5-12 12-11l-1 10-9 11zM530 810l6-17 2 4-3 15zM538 800l9-4 2 8-8 6-6-2zM547 763l8-3 12 2 10-1-12 9-6 6-8-2zM537 785l18 0-2 4-13-1zM595 752l6-2 2 3-6 2zM560 745l14 1-8 4z" />
    </g>
    <g clipPath="url(#east)">
      <path d={specks(5, 150, 1110, 153, 330, 55, 1.800)} fill="#e9ebda" />
      <path d={specks(15, 60, 1320, 153, 120, 50, 2.500)} fill="#eeebe0" />
      <path d={specks(17, 55, 1328, 170, 35, 35, 3)} fill="#eeeae0" />
      <path d={specks(19, 45, 1262, 165, 38, 32, 2.600)} fill="#eeeae0" />
      <path d={specks(7, 130, 1110, 153, 330, 280, 1.500)} fill="#e3ead2" />
      <path d={specks(29, 35, 1110, 242, 42, 16, 2)} fill="#e8e8de" />
      <path d={specks(31, 30, 1322, 200, 8, 60, 2)} fill="#e8e8de" />
      <path d={specks(8, 180, 1110, 170, 330, 260, 1.800)} fill="#abcdc2" />
      <path d={specks(9, 50, 1130, 290, 300, 40, 2.800)} fill="#afd0c8" />
      <path d={specks(37, 30, 1300, 350, 100, 70, 2)} fill="#e3ead0" />
      <path d="M1134 153h14l-4 12-8-2zM1392 340l4 1 6 15-5-1zM1334 153h12l-3 10-4-3zM1206 250l3 0 2 10-4 0zM1425 320l15 15v3zM1380 353l13 12 8 13-12-10zM1300 398l12 12 8 10-4-12z" fill="#b5d0d0" />
    </g>
    <g clipPath="url(#south)">
      <path d={specks(11, 260, 415, 724, 150, 130, 1.600)} fill="#d6e4c2" />
      <path d={specks(12, 130, 415, 724, 150, 130, 2.400)} fill="#b3d0c9" />
      <path d="M512 722l12 18 25 15 3 8-15-10-18-12-10-18zM455 770l7-15 3 2-5 16zM415 828l8 12 2 15-6-10zM548 724l8 18 7 4 0-20zM426 740l14 4-2 8-10-4z" fill="#b5d0d0" />
      <path d="M430 838l8 2-4 10zM470 830l13 5-5 18-6-8z" fill="#e6e8d4" />
    </g>
    <path d="M553 724l20 0 15 4 1 5-12-2-14-2z" fill="#d9d6c8" />
    <g fill="#a2ce95" stroke="#74ba76" strokeWidth="1.300">
      <path d="M1399 246l7-6 15 2 1 6 5 0 0-6 5 0 1 8 5 0v22l-13-1v-9l-8 1-6-4-11 1z" />
      <path d="M1261 355l5-4 4-8 9 3 1 4 5 0 4 7-11 4-2 8-10 0-6-9z" />
      <path d="M1261 390l21 5-3 5 1 9-5 6-1 6-6 1-7-6z" />
      <path d="M1187 397l12-5 9-3 9-1 3 8 5 2-8 7-5 8-7 2-17-13z" />
      <path d="M1202 406q5-7 7 0l-3 4zM1192 372l7 6 12-1 3-5 0-6 4 1 0 10-10 4-12-2z" />
      <path d="M1248 155l6 5 7-2 6 3-1 4-7-1-1 4-8-6z" />
    </g>
    <path d="M1270 352l10-2 2 4-6 5-6-3z" fill="#e2e2d2" />
    <g fill="none" stroke="#b9beb9" strokeWidth="1.800" strokeLinejoin="round">
      <path d="M1113 182L1138 188 1140 195 1153 197 1163 218 1180 217 1193 225 1207 246 1211 259 1252 260 1262 280 1280 297 1285 304" />
      <path d="M1113 246L1153 260 1168 275 1171 288 1178 312 1200 318 1217 315 1245 320 1260 314 1286 324 1290 322" />
      <path d="M1334 155L1340 180 1325 212 1327 235 1324 268 1313 268 1292 265M1324 268L1322 283 1340 309 1355 320 1380 330 1397 342 1411 350 1424 366 1436 372M1313 360L1343 381 1355 392 1370 397 1378 389 1390 395 1401 370 1402 355 1411 349" />
    </g>
    <g fill="none" stroke="#77786f" strokeWidth="1.200">
      <path d="M1113 165l20-10M1150 153l-2 8M1180 154l7 6 20-6 15 14 3 3M1250 182l20-15 18-6M1336 156l12 10 18-6 10 8 25-2M1430 155l10 12" />
    </g>
    <path d="M1113 168L1145 168 1152 177 1173 178 1217 172M1400 163l25-9 15 25" fill="none" stroke="#f4bd6d" strokeWidth="1.700" />
    <path d="M1113 177L1130 169 1152 173 1173 178 1190 177 1217 171" fill="none" stroke="#e46f80" strokeWidth="2" />
    <path d="M1217 171L1222 167 1230 171 1250 173 1262 181" fill="none" stroke="#f29a72" strokeWidth="2" />
    <path d="M1262 181L1287 167 1303 161 1320 164" fill="none" stroke="#e46f80" strokeWidth="2.200" />
    <path d="M1320 164L1347 170 1380 171" fill="none" stroke="#f29a72" strokeWidth="2" />
    <path d="M1380 171L1409 163 1440 157" fill="none" stroke="#e46f80" strokeWidth="2" />
    <path d="M1306 160L1305 170 1292 181 1289 187 1291 200 1297 205 1298 213 1303 220 1300 237 1297 252 1292 267 1287 277 1288 317 1291 322 1299 323 1304 347 1313 361 1313 373 1304 375 1302 387 1306 395 1307 417 1305 429 1295 428 1291 438 1272 435 1275 447 1279 455 1267 455 1253 452" fill="none" stroke="#f3bd70" strokeWidth="2" />
    <path d="M1226 477.500H1258V487.500H1275V494H1257V502H1216.500V508H1198V524H1181V515H1172V509H1181V501H1189V495H1197V488H1203V494H1214V488H1222V482H1226z" fill="#adcbc2" stroke="#82b78f" strokeWidth="1.500" />
    <path d={RED} fill="#d7191c" stroke="#2b1515" strokeWidth="1.200" />
    <path d="M1131 476l8 6 9 9 0 9 5 20" fill="none" stroke="#a3bdbd" strokeWidth="2" />
    <path d="M1113 516l12 4 4 16-8-4zM1249 481l5-1 0 3-4 0zM1240 490l3 1-2 1zM1262 493l5-1 0 1zM1183 508l2-1 1 3-3 1zM1184 523l2-2M1193 521l3-1M1252 476l2 0M1167 511l2 1M1195 500l3-1M1240 473l2-1 0 2M1130 512l6 0 1 4-4 1zM1155 506l5-3 2 3-4 4zM1209 485l2 3-2 1zM1253 462l1-1M1254 469l1-1M1253 485l1 1M1272 490l1 2M1160 532l1 0M1171 531l1 0M1227 473l1 0M1253 499l1 0M1175 498l1 1M1186 504l1 1M1140 517l1 1" fill="#c5161a" stroke="#241313" strokeWidth="1.200" />
    <g fill="none" stroke="#b192bf">
      <path d="M1113 550L1160 539 1240 527 1280 495 1310 475 1355 444 1400 427 1440 416M640 724L610 753 580 784 558 815 535 832 508 855" strokeWidth="1.200" strokeDasharray="5 3.500" />
      <path d="M1440 481L1427 484 1402 493 1385 512 1361 531 1340 548 1322 557 1300 562 1280 570 1230 593 1180 617 1113 641" strokeWidth="2" />
      <path d="M886 724L880 742 870 758 858 771 840 780 815 786 790 789 765 789 750 785 725 785 705 780 689 774 686 786 678 801 668 814 653 828 647 839 634 855" strokeWidth="2" />
    </g>
    <path d="M483 724L481 735 476 748 480 760 481 775 472 792 463 802 452 812 453 823 446 840 439 855" fill="none" stroke="#ee8c6c" strokeWidth="2" />
    <path d="M483 724L482 738 476 748" fill="none" stroke="#d9607a" strokeWidth="2" />
    <path d="M483 728q15-4 30-1t22-2" fill="none" stroke="#dda65c" strokeWidth="1.500" />
    <path d="M513 727L525 747 543 757 543 773 527 787 515 789 503 804 503 820 495 826 480 821 455 823" fill="none" stroke="#aeb2b0" strokeWidth="1.500" />
    <g fontFamily="DejaVu Sans, sans-serif" fontSize="8.500" fill="#1c1c1c">
      <text x="1289" y="159.500" textLength="38">Antigonish</text>
      <text x="469" y="725.500" textLength="42">Bridgewater</text>
      <text x="537" y="725.500" textLength="40">Lunenburg</text>
    </g>
  </svg>
);

/* ---------- form controls ---------- */
const blue = "linear-gradient(#6bb3f7, #147bfd)";
const Push = styled.button<{ $w: number; $primary?: boolean }>`
  width: ${(p) => p.$w}px; height: 21px; flex: none; border-radius: 4px; border: 1px solid ${(p) => (p.$primary ? "#2b82ea" : "#c4c4c4")}; border-bottom-color: ${(p) => (p.$primary ? "#0a63ee" : "#a9a9a9")};
  background: ${(p) => (p.$primary ? blue : "#fff")}; font: 13px "Liberation Sans", Arial, sans-serif; color: #000; padding: 0 0 4px; display: flex; align-items: center; justify-content: center;
`;
const PushCaret = styled.i` border: 3.500px solid transparent; border-top: 5px solid #222; border-bottom: 0; margin: 4px 0 0 3px; `;
const PushText = styled.span` padding-left: 7px; `;
const Field = styled.div<{ $w: number; $h?: number; $pad?: number; $center?: boolean }>`
  width: ${(p) => p.$w}px; height: ${(p) => p.$h ?? 21}px; flex: none; background: #fff; border: 1px solid #b9b9b9; display: flex; align-items: center; padding: 0 0 2px ${(p) => p.$pad ?? 5}px; ${(p) => p.$center && "justify-content:center;padding:0 2px 2px 0;"}
`;
const Combo = styled.div<{ $w: number; $h?: number; $square?: boolean }>`
  width: ${(p) => p.$w}px; height: ${(p) => p.$h ?? 21}px; flex: none; display: flex; background: #fff; border: 1px solid #bcbcbc; border-right: 0; border-bottom-color: #a9a9a9;
  border-radius: ${(p) => (p.$square ? "0 4px 4px 0" : "4px")};
`;
const ComboText = styled.div<{ $pad: number; $up?: number }>` flex: 1; display: flex; align-items: center; padding: 0 0 ${(p) => p.$up ?? 4}px ${(p) => p.$pad}px; `;
const Cap = styled.div<{ $off?: boolean }>`
  width: 17px; margin: -1px 0; border-radius: 0 4px 4px 0; background: ${(p) => (p.$off ? "#d2d2d2" : blue)}; display: flex; align-items: center; justify-content: center;
`;
const Chevs = ({ c = "#fff" }: { c?: string }) => <svg width="9" height="13" viewBox="0 0 9 13" fill="none" stroke={c} strokeWidth="1.500"><path d="M1.500 4.500l3-3 3 3M1.500 8.500l3 3 3-3" /></svg>;
const SpinChevs = () => <svg width="9" height="15" viewBox="0 0 9 15" fill="none" stroke="#333" strokeWidth="1.300"><path d="M2 5l2.500-2.500L7 5M2 10.500L4.500 13 7 10.500" /></svg>;
const SpinBox = styled.div` width: 13px; height: 22px; flex: none; border-radius: 6.500px; border: 1px solid #b4b4b4; background: #fff; display: flex; align-items: center; justify-content: center; `;
const Text = styled.span<{ $w?: number; $l?: number; $up?: number }>`
  flex: none; white-space: nowrap; ${(p) => p.$w && `width:${p.$w}px;`} margin-left: ${(p) => p.$l ?? 0}px; padding-bottom: ${(p) => p.$up ?? 3}px;
`;
const Gap = styled.div<{ $w: number }>` width: ${(p) => p.$w}px; flex: none; `;

/* ---------- dialog ---------- */
const Dialog = styled.section`
  position: absolute; left: 143px; top: 148px; width: 970px; height: 576px; border-radius: 5px; background: #ebebeb; display: flex; flex-direction: column; overflow: hidden;
`;
const DialogShade = styled.div`
  position: absolute; left: 143px; top: 148px; width: 970px; height: 576px; border-radius: 5px; box-shadow: 0 0 1px rgba(0,0,0,.6), 0 22px 46px rgba(0,0,0,.56);
`;
const DialogTitle = styled.div`
  height: 21px; flex: none; display: flex; align-items: center; background: linear-gradient(#ebebeb, #d3d3d3); border-bottom: 1px solid #c4c4c4; font: 13px Inter, sans-serif; color: #444;
`;
const TitleText = styled.div` display: flex; align-items: center; gap: 4px; white-space: nowrap; font-feature-settings: "calt" 0; letter-spacing: .04px; padding-right: 2px; `;
const DialogBody = styled.div` flex: 1; display: flex; `;
const Nav = styled.nav` width: 150px; background: #5c5c5c; `;
const NavItem = styled.div<{ $on?: boolean }>`
  height: 36px; display: flex; align-items: center; gap: ${(p) => (p.$on ? 11 : 8)}px; padding-left: ${(p) => (p.$on ? 11 : 7)}px;
  background: ${(p) => (p.$on ? "#ebebeb" : "transparent")}; color: ${(p) => (p.$on ? "#000" : "#fff")};
  span { padding-bottom: 2px; ${(p) => !p.$on && "-webkit-text-stroke: .35px #fff; text-shadow: 0 0 1px rgba(0,0,0,.8);"} }
`;
const Main = styled.div` flex: 1; display: flex; flex-direction: column; `;
const ScrollRow = styled.div` height: 511px; display: flex; `;
const Form = styled.div` width: 803px; padding: 5px 0 0 13px; `;
const ScrollTrack = styled.div` width: 13px; height: 507px; margin-top: 3px; background: #fafafa; padding: 1px 0 0 3px; `;
const ScrollThumb = styled.div` width: 8px; height: 389px; border-radius: 4px; background: #c1c1c1; `;
const Row = styled.div<{ $mt: number; $h?: number }>` margin-top: ${(p) => p.$mt}px; height: ${(p) => p.$h ?? 21}px; display: flex; align-items: center; `;
const EpsButton = styled.div` width: 26px; height: 26px; background: linear-gradient(#e8e8e8, #f6f6f6); border: 1px solid #b3b3b3; display: flex; align-items: center; justify-content: center; align-self: flex-start; margin-left: 10px; `;
const Ramp = styled.i` width: 50px; height: 16px; margin: 3px 3px 0 0; background: linear-gradient(90deg, #d7191c, #fdae61 25%, #ffffbf 52%, #a6d96a 75%, #1a9641); `;
const SymbolSwatch = styled.i` width: 16px; height: 16px; background: #56d28c; border: 1px solid #38835a; margin: 3px 6px 0 0; `;
const Tabs = styled.div` margin: 17px 0 0 307px; height: 20px; width: 151px; display: flex; position: relative; `;
const Tab = styled.div<{ $on?: boolean }>`
  width: ${(p) => (p.$on ? 84 : 67)}px; display: flex; align-items: center; justify-content: center; padding-bottom: 1px;
  ${(p) => (p.$on ? `background:${blue};color:#fff;border-radius:0 4px 4px 0;padding-left:3px;-webkit-text-stroke:.3px #fff;` : "background:#fff;border:1px solid #c0c0c0;border-right:0;border-radius:4px 0 0 4px;padding-right:2px;")}
`;
const Group = styled.div` margin-top: -10px; width: 767px; height: 227px; background: #e2e2e2; border: 1px solid #d8d8d8; border-radius: 4px; padding: 37px 0 0 33px; `;
const AdvancedRow = styled.div` width: 777px; margin-top: 20px; display: flex; justify-content: flex-end; `;
const Footer = styled.div` flex: 1; display: flex; padding: 13px 9px 0 13px; gap: 14px; `;
const SplitHandle = styled.div` position: absolute; left: 150px; top: 294px; width: 7px; height: 9px; background: #f6f6f6; border: solid #d0d0d0; border-width: 1px 0; display: flex; align-items: center; &::after { content: ""; width: 6px; height: 6px; border-radius: 50%; background: #bbb; } `;

const navItems: [string, string][] = [["general", "General"], ["stylei", "Style"], ["labels", "Labels"], ["fields", "Fields"], ["rendering", "Rendering"], ["display", "Display"], ["actions", "Actions"], ["joins", "Joins"], ["diagrams", "Diagrams"], ["metadata", "Metadata"], ["variables", "Variables"]];

const bars: [number, number, number, string][] = [
  [458, 475, 507, "#d7191c"], [491, 508, 489, "#fdae61"], [508, 524, 498, "#fdae61"], [524, 540, 480, "#fdae61"], [540, 549, 452, "#fdae61"],
  [630, 641, 504, "#a6d96a"], [641, 657, 501, "#a6d96a"], [657, 674, 507, "#a6d96a"], [674, 690, 498, "#a6d96a"],
  [707, 723, 504, "#1a9641"], [723, 740, 507, "#1a9641"], [806, 840, 507, "#1a9641"], [923, 957, 507, "#1a9641"],
];
const yellow: [number, number, number][] = [[549.5, 558.5, 452.5], [558.5, 574.5, 476.5], [574.5, 591.5, 480.5], [591.5, 607.5, 489.5], [607.5, 624.5, 492.5], [624.5, 629.5, 504.5]];
const breaks: [number, string][] = [[484.5, "-8.35681"], [549.5, "-0.219092"], [629.5, "9.79656"], [698.5, "18.4351"], [956.5, "50.7"]];
const yTicks = [449.5, 464.5, 480.5, 495.5, 510.5];

const Chart = () => (
  <svg width="700" height="110" viewBox="340 440 700 110" fontSize="12.500" fontFamily="Liberation Sans, Arial, sans-serif">
    <rect x="387" y="442" width="651" height="73" fill="#ebebeb" />
    {yTicks.map((y) => <path key={y} d={`M387 ${y}H1038`} stroke="#c5c5c5" />)}
    {bars.map(([a, b, t, c]) => <rect key={a} x={a} y={t} width={b - a} height={510 - t} fill={c} />)}
    {yellow.map(([a, b, t]) => <rect key={a} x={a} y={t} width={b - a} height={510.5 - t} fill="#ffffbf" stroke="#a8a87e" />)}
    {breaks.map(([x, t]) => (
      <g key={t}>
        <path d={`M${x} 442V515`} stroke="#000" />
        <text transform={`translate(${x - 6} 445) rotate(-90)`} textAnchor="end">{t}</text>
      </g>
    ))}
    <path d="M384.500 449V511" stroke="#000" />
    {yTicks.map((y, i) => (
      <g key={y}>
        <path d={`M376 ${y}H385`} stroke="#000" />
        <text x="371" y={y + 4.500} textAnchor="end">{20 - i * 5}</text>
      </g>
    ))}
    {Array.from({ length: 20 }, (_, i) => <path key={i} d={`M380 ${Math.round(449 + i * 3.050) + 0.5}H385`} stroke="#000" />)}
    <text transform="translate(351 480) rotate(-90)" textAnchor="middle" fontWeight="700">Count</text>
    <path d="M391 517.500H1031" stroke="#000" />
    {Array.from({ length: 41 }, (_, i) => <path key={i} d={`M${Math.floor(391.300 + i * 15.970) + 0.5} 517V${i % 5 ? 522 : 526}`} stroke="#000" />)}
    {Array.from({ length: 9 }, (_, i) => <text key={i} x={390.500 + i * 79.900} y="541" textAnchor="middle">{i * 10 - 20}</text>)}
  </svg>
);

const LayerDialog = () => (
  <Dialog>
    <DialogTitle>
      <Lights>
        <Light $c="#fc5753" $b="#e0443e" /><Light $c="#d0d0d0" $b="#bebebe" /><Light $c="#10c850" $b="#0aa63e" />
      </Lights>
      <TitleText>
        <svg width="14" height="15" viewBox="0 0 14 15"><path d="M4 3l3 1 1-3 3 1 2 4-3 2 1 3-4 1-4-1 1-3z" fill="#b9d13a" stroke="#8ea42c" strokeWidth=".7" /><path d="M1 12l2 2M2 13L12 1.500" stroke="#333" strokeWidth="1.300" /></svg>
        Layer Properties - NS_Census_Tracts_2011 | Style
      </TitleText>
      <Spacer />
    </DialogTitle>
    <DialogBody>
      <Nav>
        {navItems.map(([icon, label], i) => (
          <NavItem key={label} $on={i === 1}><Icon name={icon} /><span>{label}</span></NavItem>
        ))}
      </Nav>
      <Main>
        <ScrollRow>
          <Form>
            <Row $mt={0}>
              <Gap $w={2} />
              <Combo $w={159}>
                <ComboText $pad={12}>
                  <svg width="12" height="16" viewBox="0 -1 12 16"><path d="M0 1h7v3H0z" fill="#f7c40e" stroke="#b38a00" strokeWidth=".5" /><path d="M4 5h7v3H4z" fill="#f79a0e" stroke="#9a5a00" strokeWidth=".5" /><path d="M0 8.500h7v3H0z" fill="#f7520e" stroke="#9a3000" strokeWidth=".5" /><path d="M4 12h7v3H4z" fill="#e60000" /></svg>
                  <Text $l={4} $up={0}>Graduated</Text>
                </ComboText>
                <Cap><Chevs /></Cap>
              </Combo>
            </Row>
            <Row $mt={21} $h={27}>
              <Text $w={102} $up={2}>Column</Text>
              <Combo $w={400} $h={25} $square>
                <ComboText $pad={2} $up={2}><Text $up={0}>ns_2011_06_11_Pop_Change</Text></ComboText>
                <Cap><svg width="9" height="8" viewBox="0 0 9 8"><path d="M2 2l2.500 2.500L7 2M4.500 4v3" fill="none" stroke="#fff" strokeWidth="1.400" /></svg></Cap>
              </Combo>
              <EpsButton><Icon name="variables" size={15} /></EpsButton>
            </Row>
            <Row $mt={13}>
              <Text $w={99} $up={4}>Symbol</Text>
              <Push $w={439}><SymbolSwatch />Change...</Push>
            </Row>
            <Row $mt={10} $h={22}>
              <Text $w={99}>Legend Format</Text>
              <Field $w={439}>%1 - %2</Field>
              <Text $l={10} $w={65}>Precision</Text>
              <Field $w={92} $h={22} $pad={2}>0</Field>
              <Gap $w={3} /><SpinBox><SpinChevs /></SpinBox>
              <Gap $w={13} /><CheckBox /><Text $l={4}>Trim</Text>
            </Row>
            <Row $mt={11}>
              <Text $w={98} $up={4}>Method</Text>
              <Combo $w={440}><ComboText $pad={8}>Color</ComboText><Cap><Chevs /></Cap></Combo>
            </Row>
            <Row $mt={13}>
              <Gap $w={99} /><Text $w={72} $up={4}>Color ramp</Text>
              <Combo $w={435}><ComboText $pad={9}><Ramp />[source]</ComboText><Cap><Chevs /></Cap></Combo>
              <Gap $w={14} /><Push $w={53}>Edit</Push>
              <Gap $w={14} /><CheckBox /><Text $l={4} $up={4}>Invert</Text>
            </Row>
            <Tabs><Tab>Classes</Tab><Tab $on>Histogram</Tab></Tabs>
            <Group>
              <Chart />
              <Row $mt={13} $h={22}>
                <Gap $w={1} /><Text $w={96}>Histogram bins</Text>
                <Field $w={35} $h={22} $pad={2}>30</Field>
                <Gap $w={3} /><SpinBox><SpinChevs /></SpinBox>
                <Gap $w={13} /><CheckBox /><Text $l={4} $w={112}>Show mean value</Text>
                <CheckBox /><Text $l={4} $w={282}>Show standard deviation</Text>
                <Push $w={101}>Load values</Push>
              </Row>
            </Group>
            <AdvancedRow><Push $w={100}><PushText>Advanced</PushText><PushCaret /></Push></AdvancedRow>
          </Form>
          <ScrollTrack><ScrollThumb /></ScrollTrack>
        </ScrollRow>
        <Footer>
          <Push $w={57}>Help</Push>
          <Push $w={71}><PushText>Style</PushText><PushCaret /></Push>
          <Push $w={63}>Apply</Push>
          <Spacer />
          <Push $w={69}>Cancel</Push>
          <Push $w={69} $primary>OK</Push>
        </Footer>
      </Main>
    </DialogBody>
    <SplitHandle />
  </Dialog>
);

/* ---------- status bar ---------- */
const StatusBar = styled.footer` height: 41px; flex: none; background: #ebebeb; border-top: 1px solid #b3b3b3; display: flex; align-items: center; padding-left: 6px; border-radius: 0 0 4px 4px; `;
const Flat = styled.div<{ $w: number; $h: number; $pad?: number }>` width: ${(p) => p.$w}px; height: ${(p) => p.$h}px; flex: none; border: 1px solid #c2c2c2; background: #e7e7e7; display: flex; align-items: center; padding-left: ${(p) => p.$pad ?? 4}px; gap: 4px; white-space: nowrap; letter-spacing: -.05px; `;
const SpinShade = styled.i` width: 42px; height: 19px; background: #ebebeb; margin: 1px 1px 0 auto; `;

const Status = () => (
  <StatusBar>
    <Text $w={395} $up={2}>Toggles the editing state of the current layer</Text>
    <Flat $w={20} $h={26} $pad={1}>
      <svg width="16" height="18" viewBox="0 0 16 18" fill="none" stroke="#222"><ellipse cx="5.500" cy="6" rx="3.500" ry="5" fill="#bbb" strokeWidth="1.500" transform="rotate(20 5 6)" /><path d="M4 3l3 6M6 2l2 6" strokeWidth="1.500" /><circle cx="9.500" cy="12" r="4" strokeWidth="1.800" /><circle cx="9.500" cy="12" r="1.200" /><path d="M1 13l4-1M10 6l6-4M8 8l6-2" strokeWidth="1.200" strokeDasharray="2 1" /></svg>
    </Flat>
    <Text $l={9} $w={77} $up={2}>Coordinate:</Text>
    <Field $w={299} $center>-7205212,5565650</Field>
    <Text $l={10} $w={46} $up={2}>Scale</Text>
    <Combo $w={117} $h={22} $square><ComboText $pad={2} $up={1}><Text $up={0}>1:976,102</Text></ComboText><Cap $off><svg width="9" height="7" viewBox="0 0 9 7"><path d="M1.500 2l3 3 3-3" fill="none" stroke="#fff" strokeWidth="1.300" /></svg></Cap></Combo>
    <Text $l={10} $w={62} $up={2}>Rotation:</Text>
    <Field $w={88} $pad={2}>0.0<SpinShade /></Field>
    <Gap $w={3} /><SpinBox><SpinChevs /></SpinBox>
    <Gap $w={7} /><CheckBox $dim><Tick c="#d0d0d0" /></CheckBox>
    <Text $l={4} $w={45} $up={2}>Render</Text>
    <Flat $w={145} $h={18}>
      <svg width="16" height="16" viewBox="0 0 16 16"><circle cx="8" cy="8" r="7.500" fill="#2a2a2a" /><circle cx="8" cy="8" r="4" fill="none" stroke="#ddd" /><path d="M8 1v14M1 8h14" stroke="#ddd" /></svg>
      <Text $up={2}>EPSG:3395 (OTF)</Text>
    </Flat>
    <Gap $w={6} />
    <Flat $w={38} $h={18}>
      <svg width="16" height="16" viewBox="0 0 16 16"><path d="M8 1a7 6.500 0 1 0 3 12.500L14 16l-.5-4A6.500 6.500 0 0 0 8 1z" fill="#5b5b5b" /><path d="M4 7.500h2M7.200 7.500h2M10.300 7.500h2" stroke="#fff" strokeWidth="2" /></svg>
    </Flat>
    <Spacer />
    <svg width="12" height="12" viewBox="0 0 12 12" overflow="visible"><path d="M1 21L12 10M5 21l7-7M9 21l3-3" stroke="#888" /></svg>
  </StatusBar>
);

export default function App() {
  return (
    <Screen>
      <Global />
      <Menu />
      <WindowTitle>
        <Lights>{[0, 1, 2].map((i) => <Light key={i} $c="#dcdcdc" $b="#cdcdcd" />)}</Lights>
        <TitleLabel>QGIS 2.12.1-Lyon</TitleLabel>
        <Spacer />
      </WindowTitle>
      <Toolbars />
      <Workspace>
        <SideTools>
          <SideGripSlot $mt={6}><Dots n={12} across /></SideGripSlot>
          {sideTop.map((k) => <SideTool key={k}><Icon name={k} />{k === "vnew" && <SideCaret />}</SideTool>)}
          <SideGripSlot $mt={7}><Dots n={12} across /></SideGripSlot>
          {["gps", "topo", "evis"].map((k) => <SideTool key={k}><Icon name={k} /></SideTool>)}
        </SideTools>
        <LayerPanel>
          <PanelHead>
            <svg width="14" height="14" viewBox="0 0 14 14"><circle cx="7" cy="7" r="7" fill="#3a3a3a" /><path d="M4.200 4.200l5.600 5.600M9.800 4.200L4.200 9.800" stroke="#fff" strokeWidth="1.800" /></svg>
            <svg width="14" height="14" viewBox="0 0 14 14"><circle cx="7" cy="7" r="7" fill="#3a3a3a" /><path d="M5.500 5.500V3.500h5v4h-2M3.500 6h5v4h-5z" stroke="#fff" fill="none" strokeWidth="1.200" /></svg>
          </PanelHead>
          <PanelTools>
            <svg width="16" height="17" viewBox="0 0 16 17" fill="#ddd" stroke="#888"><path d="M1.500 7v9h9M3.500 5v9h9M5.500 3.500h7v9h-7z" /><path d="M8 6V2q1-2 2 0v8" fill="none" stroke="#555" /><path d="M12 10v6M9 13h6" stroke="#4c9a4c" strokeWidth="2" /></svg>
            <Gap $w={2} />
            <svg width="18" height="14" viewBox="0 0 18 14"><path d="M1 7q7-9 14 0-7 7-14 0z" fill="#ddd" stroke="#888" /><circle cx="8" cy="6.500" r="3.300" fill="#4f80b4" /><circle cx="8" cy="6.500" r="1.400" fill="#111" /><path d="M14 8v5M11.500 10.500h5" stroke="#777" strokeWidth="1.500" /></svg>
            <Gap $w={0} />
            <svg width="16" height="16" viewBox="0 0 16 16"><path d="M1 4h14l-5 6v5.500l-4-2V10z" fill="#5d8fcc" stroke="#47719f" /><path d="M1 1.500h14v2H1z" fill="#f2d93c" stroke="#a8922b" strokeWidth=".7" /></svg>
          </PanelTools>
          <TreeHead />
          <TreeRow $pad={0} $h={19}>
            <TreeIcon $l={27} $r={7}><svg width="14" height="16" viewBox="0 0 14 16"><rect x=".5" y=".5" width="13" height="15" rx="1" fill="#f1f1f1" stroke="#888" /><path d="M2 4h4M8 4h4M2 7h4M8 7h4M2 10h4M8 10h4M2 13h4M8 13h4" stroke="#666" /></svg></TreeIcon>
            ns_2011
          </TreeRow>
          <TreeRow $pad={7} $sel $u>
            <Twisty /><CheckBox><Tick /></CheckBox>
            <TreeIcon $l={12} $r={6}><svg width="17" height="14" viewBox="0 0 17 14"><path d="M1 3q3-3 7 0 4 1 8-1v9q-3 2-6-1-4 0-8 1-2-4-1-8z" fill="#cfdbe8" stroke="#9dadbe" /></svg></TreeIcon>
            NS
          </TreeRow>
          {classes.map((c) => <TreeRow key={c} $pad={48}><CheckBox><Tick /></CheckBox><Swatch $c={c} /></TreeRow>)}
          <TreeRow $pad={28}><CheckBox><Tick /></CheckBox><Gap $w={13} />OSM M</TreeRow>
        </LayerPanel>
        <MapCanvas />
      </Workspace>
      <Status />
      <DialogShade />
      <LayerDialog />
    </Screen>
  );
}
